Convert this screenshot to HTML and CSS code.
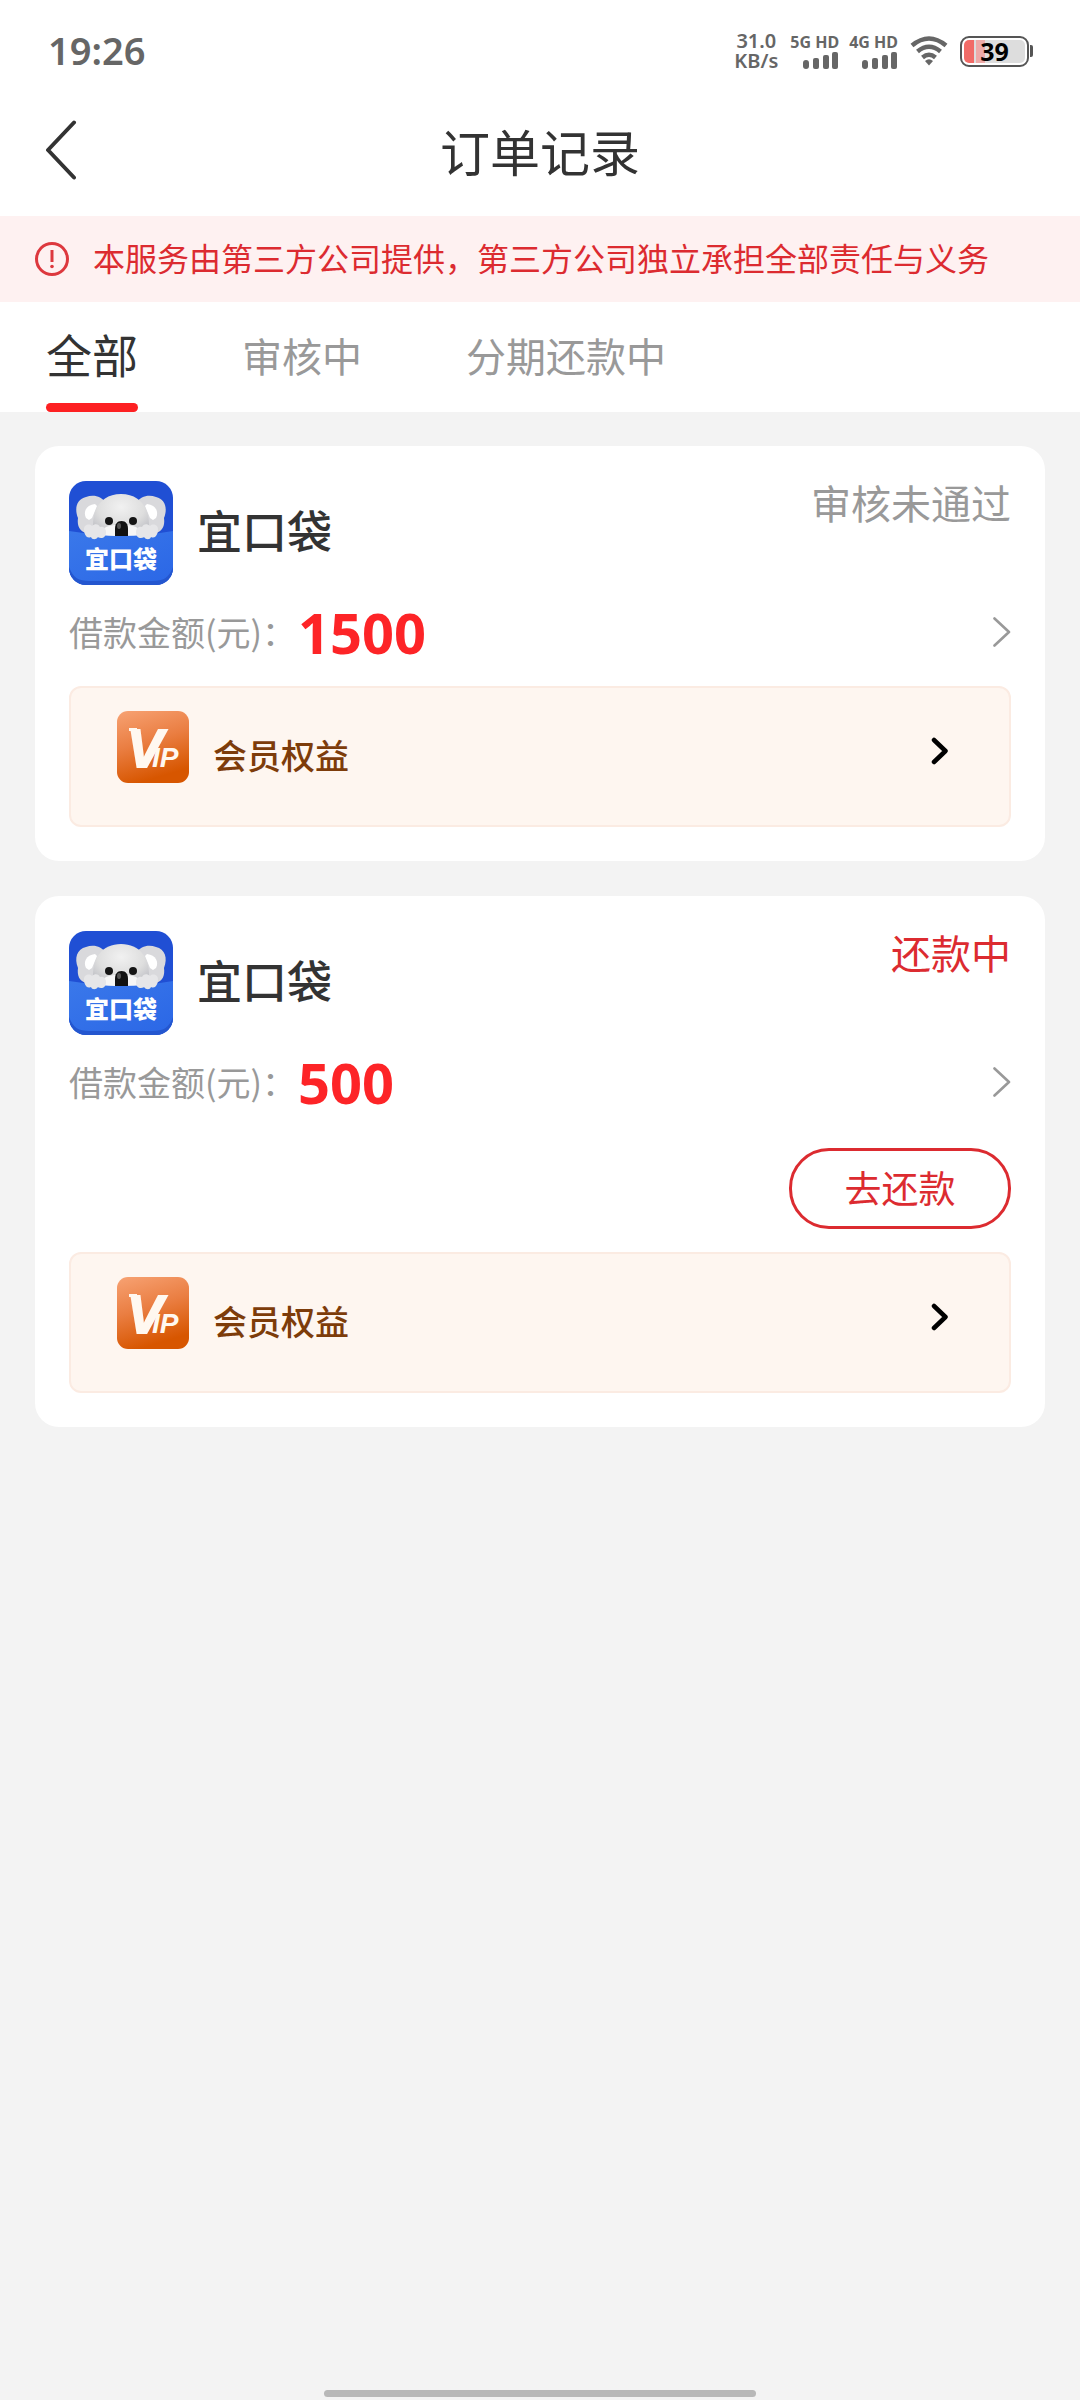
FILE: index.html
```html
<!DOCTYPE html>
<html lang="zh-CN">
<head>
<meta charset="utf-8">
<meta name="viewport" content="width=device-width, initial-scale=1">
<title>订单记录</title>
<link rel="stylesheet" href="styles.css">
</head>
<body>
<svg class="defs" width="0" height="0" aria-hidden="true">
  <defs>
    <linearGradient id="vip-bg" x1="0" y1="0" x2="0.3" y2="1">
      <stop offset="0" stop-color="#f7a273"/>
      <stop offset="0.5" stop-color="#ea7e42"/>
      <stop offset="1" stop-color="#d75600"/>
    </linearGradient>
    <linearGradient id="pocket" x1="0" y1="0" x2="1" y2="1">
      <stop offset="0" stop-color="#3a78ea"/>
      <stop offset="1" stop-color="#2b67e6"/>
    </linearGradient>
    <radialGradient id="fur" cx="0.5" cy="0.3" r="0.7">
      <stop offset="0" stop-color="#f1f1f1"/>
      <stop offset="0.6" stop-color="#dedede"/>
      <stop offset="1" stop-color="#bdbec4"/>
    </radialGradient>
    <clipPath id="logo-clip"><rect width="104" height="104" rx="17"/></clipPath>
    <symbol id="logo" viewBox="0 0 104 104">
      <g clip-path="url(#logo-clip)">
        <rect width="104" height="104" fill="#204fd4"/>
        <path d="M9 37C5 27 8 18 17 16c8-3 16 0 19 5l-3 31H17c-7-2-9-8-8-15Z" fill="#d9d9dc"/>
        <path d="M95 37c4-10 1-19-8-21-8-3-16 0-19 5l3 31h16c7-2 9-8 8-15Z" fill="#d9d9dc"/>
        <path d="M17 37c-3-6 0-13 9-14l2 2-5 12-3 2Z" fill="#fff"/>
        <path d="M87 37c3-6 0-13-9-14l-2 2 5 12 3 2Z" fill="#fff"/>
        <path d="M24 44c0-17 9-31 28-31s28 14 28 31c0 8-4 12-10 12H34c-6 0-10-4-10-12Z" fill="url(#fur)"/>
        <path d="M34 56v-8c7-6 29-6 36 0v8Z" fill="#f6f6f6"/>
        <path d="M0 50c20 3 35 5 52 5s35-2 52-5v51H0Z" fill="url(#pocket)"/>
        <path d="M0 86c4 11 10 14 20 14h64c10 0 16-3 20-14v18H0Z" fill="#2456cf"/>
        <circle cx="40" cy="40" r="4" fill="#151515"/>
        <circle cx="64" cy="40" r="4" fill="#151515"/>
        <path d="M46 48c0-5 2-8 6.500-8s6.500 3 6.500 8v7H46Z" fill="#111"/>
        <ellipse cx="50" cy="45" rx="2" ry="3" fill="#555"/>
        <path d="M15 48c0-4 5-6 8-3 3-3 7-2 8 1 4-1 6 2 6 5 0 4-2 6-5 6-2 0-3-1-3-1-2 3-6 3-7 0-4 2-7-2-7-8Z" fill="#e6e6e8"/>
        <path d="M89 48c0-4-5-6-8-3-3-3-7-2-8 1-4-1-6 2-6 5 0 4 2 6 5 6 2 0 3-1 3-1 2 3 6 3 7 0 4 2 7-2 7-8Z" fill="#e6e6e8"/>
        <text class="logo-text" x="16" y="87">宜口袋</text>
      </g>
    </symbol>
    <symbol id="vip" viewBox="0 0 72 72">
      <rect width="72" height="72" rx="11" fill="url(#vip-bg)"/>
      <path d="M12 17h8v3h-8Z" fill="#fff8f0"/>
      <text class="vip-text" y="56"><tspan class="vip-v" x="10">V</tspan><tspan class="vip-ip" x="35">IP</tspan></text>
    </symbol>
    <symbol id="signal" viewBox="0 0 36 17">
      <rect x="0" y="8" width="6" height="9" rx="3"/>
      <rect x="10" y="6" width="6" height="11" rx="2"/>
      <rect x="20" y="3" width="6" height="14" rx="2"/>
      <rect x="29" y="0" width="6" height="17" rx="2"/>
    </symbol>
    <symbol id="arrow" viewBox="0 0 18 30">
      <path d="M1.500 1.500 16 15 1.500 28.500" fill="none" stroke="#999" stroke-width="2.600" stroke-linecap="round" stroke-linejoin="round"/>
    </symbol>
    <symbol id="arrow-bold" viewBox="0 0 18 28">
      <path d="M3 3 14.500 14 3 25" fill="none" stroke="#000" stroke-width="4.500" stroke-linecap="round" stroke-linejoin="round"/>
    </symbol>
  </defs>
</svg>

<header class="top">
  <div class="status-bar">
    <time class="clock">19:26</time>
    <div class="status-icons">
      <div class="speed"><span>31.0</span><span>KB/s</span></div>
      <div class="network"><span>5G HD</span><svg class="signal"><use href="#signal"/></svg></div>
      <div class="network"><span>4G HD</span><svg class="signal"><use href="#signal"/></svg></div>
      <svg class="wifi" viewBox="0 0 38 30">
        <g fill="none" stroke="#666" stroke-width="4.500">
          <path d="M2 9.500Q19-4.500 36 9.500"/>
          <path d="M7.500 15.500Q19 6 30.500 15.500"/>
          <path d="M12.500 21.500Q19 16 25.500 21.500"/>
        </g>
        <path d="M15 25q4-3.500 8 0l-4 4.500Z" fill="#666"/>
      </svg>
      <div class="battery">
        <span class="battery-level"></span>
        <span class="battery-value">39</span>
      </div>
    </div>
  </div>
  <nav class="nav">
    <button class="back" type="button" aria-label="返回">
      <svg class="back-icon" viewBox="0 0 32 60"><path d="M29 2.500 3 30 29 57.500" fill="none" stroke="#333" stroke-width="4" stroke-linecap="round" stroke-linejoin="round"/></svg>
    </button>
    <h1 class="title">订单记录</h1>
  </nav>
</header>

<p class="notice">
  <svg class="notice-icon" viewBox="0 0 36 36">
    <circle cx="18" cy="18" r="15.500" fill="none" stroke="#dd383e" stroke-width="3"/>
    <path d="M18 9v12" stroke="#dd383e" stroke-width="3"/>
    <circle cx="18" cy="25.500" r="1.800" fill="#dd383e"/>
  </svg>
  <span class="notice-text">本服务由第三方公司提供，第三方公司独立承担全部责任与义务</span>
</p>

<div class="tabs" role="tablist">
  <button class="tab tab-active" type="button" role="tab" aria-selected="true">全部</button>
  <button class="tab" type="button" role="tab" aria-selected="false">审核中</button>
  <button class="tab" type="button" role="tab" aria-selected="false">分期还款中</button>
</div>

<main class="orders">
  <article class="card">
    <div class="card-head">
      <svg class="logo" role="img" aria-label="宜口袋"><use href="#logo"/></svg>
      <h2 class="name">宜口袋</h2>
      <span class="state">审核未通过</span>
    </div>
    <a class="amount" href="#order-1">
      <span class="amount-label">借款金额(元)：</span>
      <strong class="amount-value">1500</strong>
      <svg class="arrow"><use href="#arrow"/></svg>
    </a>
    <a class="benefit" href="#vip-1">
      <svg class="vip"><use href="#vip"/></svg>
      <span class="benefit-label">会员权益</span>
      <svg class="arrow-bold"><use href="#arrow-bold"/></svg>
    </a>
  </article>

  <article class="card">
    <div class="card-head">
      <svg class="logo" role="img" aria-label="宜口袋"><use href="#logo"/></svg>
      <h2 class="name">宜口袋</h2>
      <span class="state state-due">还款中</span>
    </div>
    <a class="amount" href="#order-2">
      <span class="amount-label">借款金额(元)：</span>
      <strong class="amount-value">500</strong>
      <svg class="arrow"><use href="#arrow"/></svg>
    </a>
    <div class="actions">
      <button class="repay" type="button">去还款</button>
    </div>
    <a class="benefit" href="#vip-2">
      <svg class="vip"><use href="#vip"/></svg>
      <span class="benefit-label">会员权益</span>
      <svg class="arrow-bold"><use href="#arrow-bold"/></svg>
    </a>
  </article>
</main>

<footer class="home"><span class="home-bar"></span></footer>
</body>
</html>
```
FILE: styles.css
```css
* {
  box-sizing: border-box;
}

body {
  margin: 0;
  min-height: 100vh;
  display: flex;
  flex-direction: column;
  background: #f3f3f3;
  color: #333;
  font-family: "Noto Sans CJK SC", sans-serif;
}

h1, h2, p {
  margin: 0;
  font-weight: 400;
}

button {
  padding: 0;
  border: 0;
  background: none;
  color: inherit;
  font: inherit;
}

a {
  color: inherit;
  text-decoration: none;
}

svg {
  display: block;
  flex: none;
}

.defs {
  position: absolute;
}

.top {
  background: #fff;
}

/* System status bar */
.status-bar {
  display: flex;
  align-items: center;
  justify-content: space-between;
  height: 94px;
  padding: 8px 48px 0;
  color: #666;
  font-family: "Noto Sans", sans-serif;
  font-weight: 600;
}

.clock {
  padding-bottom: 3px;
  font-size: 38px;
  line-height: 48px;
}

.status-icons {
  display: flex;
  align-items: center;
  gap: 12px;
}

.speed {
  display: flex;
  flex-direction: column;
  align-items: center;
  font-size: 20px;
  line-height: 20px;
}

.network {
  display: flex;
  flex-direction: column;
  align-items: flex-end;
  gap: 2px;
  font-size: 16px;
  font-weight: 700;
  line-height: 16px;
}

.network + .network {
  margin-left: -2px;
}

.signal {
  width: 36px;
  height: 17px;
  fill: #666;
}

.wifi {
  width: 38px;
  height: 30px;
}

.battery {
  position: relative;
  width: 69px;
  height: 31px;
  margin-right: 3px;
  padding: 2px;
  border: 2px solid #555;
  border-radius: 9px;
}

.battery::after {
  content: "";
  position: absolute;
  top: 7px;
  right: -6px;
  width: 3px;
  height: 12px;
  border-radius: 0 2px 2px 0;
  background: #555;
}

.battery-level {
  display: block;
  height: 100%;
  border-radius: 5px;
  background: linear-gradient(90deg, #f16b67 10px, #ddd 10px, #ddd 12px, #eeaaa8 12px, #eeaaa8 21px, #ddd 21px);
}

.battery-value {
  position: absolute;
  inset: 0;
  color: #000;
  font-size: 25px;
  font-weight: 700;
  line-height: 26px;
  text-align: center;
}

/* Page navigation */
.nav {
  display: grid;
  grid-template-columns: 80px 1fr 80px;
  align-items: center;
  height: 122px;
  padding-bottom: 10px;
}

.back {
  display: flex;
  justify-content: flex-end;
  height: 80px;
  align-items: center;
  padding-right: 3px;
}

.back-icon {
  width: 32px;
  height: 60px;
}

.title {
  font-size: 50px;
  line-height: 72px;
  text-align: center;
}

.notice {
  display: flex;
  align-items: center;
  gap: 23px;
  min-height: 86px;
  padding: 0 34px;
  background: #fef1f1;
  color: #dc2b30;
  font-size: 32px;
  line-height: 46px;
  white-space: nowrap;
}

.notice-icon {
  width: 36px;
  height: 36px;
}

.notice-text {
  padding-bottom: 4px;
}

/* Filter tabs */
.tabs {
  display: flex;
  gap: 104px;
  height: 110px;
  padding: 0 46px;
  background: #fff;
}

.tab {
  display: flex;
  flex-direction: column;
  justify-content: space-between;
  padding-top: 18px;
  color: #999;
  font-size: 40px;
  line-height: 70px;
}

.tab-active {
  padding-top: 16px;
  color: #333;
  font-size: 46px;
}

.tab-active::after {
  content: "";
  width: 100%;
  height: 9px;
  border-radius: 5px;
  background: #fd2022;
}

/* Order cards */
.orders {
  display: flex;
  flex-direction: column;
  gap: 35px;
  padding: 34px 35px;
}

.card {
  padding: 35px 34px 34px;
  border-radius: 24px;
  background: #fff;
}

.card-head {
  display: flex;
  align-items: center;
  gap: 24px;
}

.logo {
  width: 104px;
  height: 104px;
}

.logo-text {
  fill: #fff;
  font-size: 24px;
  font-weight: 900;
}

.name {
  flex: 1;
  padding-bottom: 6px;
  font-size: 45px;
  font-weight: 500;
  line-height: 64px;
}

.state {
  align-self: flex-start;
  color: #999;
  font-size: 40px;
  line-height: 42px;
}

.state-due {
  color: #dc2b30;
}

.amount {
  display: flex;
  align-items: center;
  height: 94px;
}

.amount-label {
  color: #999;
  font-size: 34px;
  line-height: 48px;
}

.amount-value {
  flex: 1;
  padding-left: 2px;
  color: #fd2427;
  font-family: "Noto Sans", sans-serif;
  font-size: 56px;
  line-height: 72px;
}

.arrow {
  width: 18px;
  height: 30px;
}

.actions {
  display: flex;
  justify-content: flex-end;
  padding: 19px 0 16px;
}

.repay {
  width: 222px;
  height: 81px;
  padding-bottom: 4px;
  border: 3px solid #dc2b30;
  border-radius: 40px;
  color: #dc2b30;
  font-size: 37px;
  line-height: 54px;
}

.benefit {
  display: flex;
  align-items: flex-end;
  gap: 24px;
  margin-top: 7px;
  padding: 23px 60px 42px 46px;
  border: 2px solid #fbebe2;
  border-radius: 12px;
  background: #fef6f0;
}

.vip {
  width: 72px;
  height: 72px;
}

.vip-text {
  fill: #fff8f0;
  font-family: "Liberation Sans", sans-serif;
  font-style: italic;
  font-weight: 700;
}

.vip-v {
  font-size: 54px;
  stroke: #fff8f0;
  stroke-width: 2px;
}

.vip-ip {
  font-size: 28px;
}

.benefit-label {
  flex: 1;
  color: #7d3c0a;
  font-size: 34px;
  font-weight: 500;
  line-height: 56px;
}

.arrow-bold {
  width: 18px;
  height: 64px;
}

/* Gesture bar */
.home {
  display: flex;
  justify-content: center;
  margin-top: auto;
  padding-bottom: 3px;
}

.home-bar {
  width: 40%;
  height: 7px;
  border-radius: 4px;
  background: #b8b8b8;
}
```
